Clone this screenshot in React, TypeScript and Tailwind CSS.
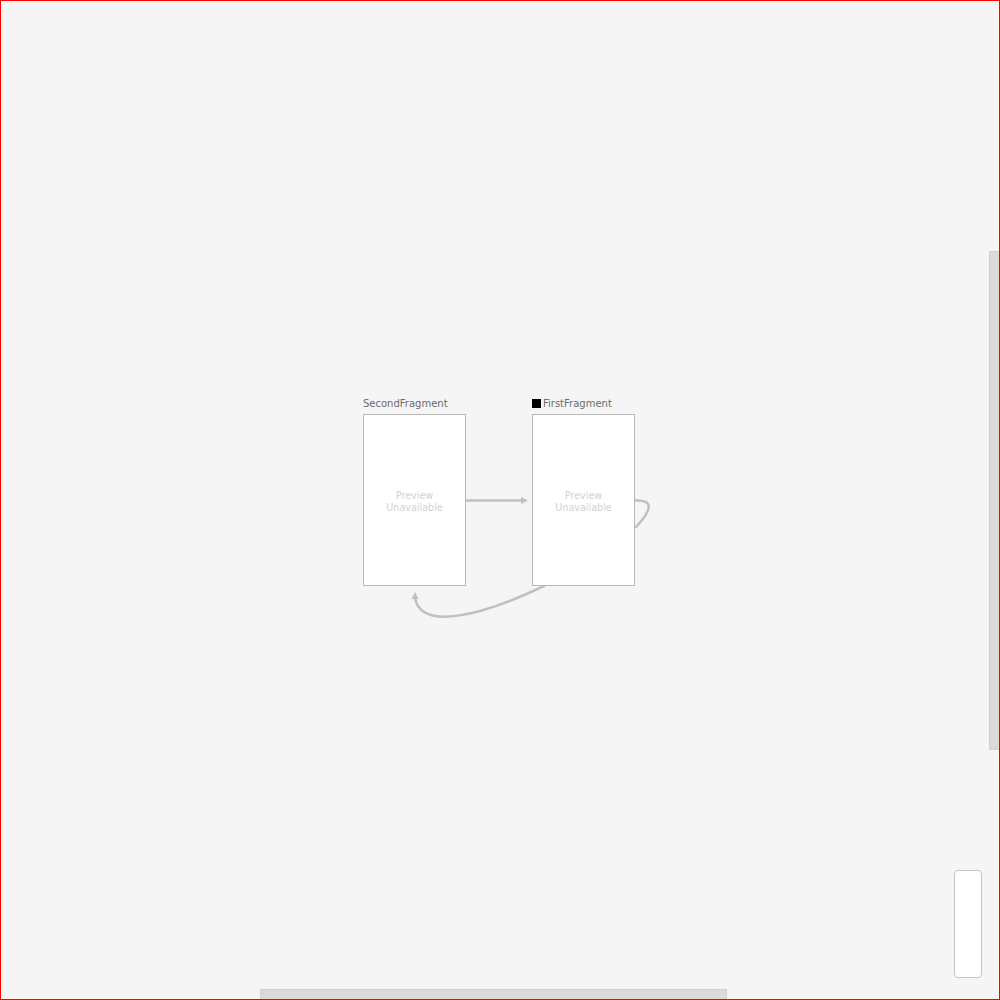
export default function App() {
  const font = { fontFamily: '"DejaVu Sans", sans-serif' };
  return (
    <div className="relative w-[1000px] h-[1000px] overflow-hidden bg-[#f5f5f5] border border-[#ff0000]" style={font}>
      <svg className="absolute left-0 top-0" width="1000" height="1000" viewBox="0 0 1000 1000">
        <g fill="none" stroke="#c0c0c0" strokeWidth="2.5" strokeLinecap="round">
          <path d="M466 499.5 L521 499.5" />
          <path d="M635 499.5 C652 499 652 508 635 526" />
          <path d="M543 585 C480 615 420 630 414 597" />
        </g>
        <polygon points="527,499.5 520,496 520,503" fill="#c0c0c0" />
        <polygon points="414,591 410.5,598 417.5,598" fill="#c0c0c0" />
      </svg>

      <div className="absolute left-[362px] top-[396px] flex flex-col gap-[4px]">
        <div className="h-[13px] text-[10px] leading-[13px] text-[#6b6b6b]">SecondFragment</div>
        <div className="w-[103px] h-[172px] bg-white border border-[#b8b8b8] flex items-center justify-center pt-[4px]">
          <div className="text-center text-[9.6px] leading-[12px] text-[#d2d2d2]">Preview<br />Unavailable</div>
        </div>
      </div>

      <div className="absolute left-[531px] top-[396px] flex flex-col gap-[4px]">
        <div className="h-[13px] flex items-center gap-[2px] text-[10px] leading-[13px] text-[#6b6b6b]">
          <span className="w-[9px] h-[9px] bg-black" />
          <span>FirstFragment</span>
        </div>
        <div className="w-[103px] h-[172px] bg-white border border-[#b8b8b8] flex items-center justify-center pt-[4px]">
          <div className="text-center text-[9.6px] leading-[12px] text-[#d2d2d2]">Preview<br />Unavailable</div>
        </div>
      </div>

      <div className="absolute left-[988px] top-[250px] w-[11px] h-[499px] bg-[#dadada] border border-[#d2d2d2]" />
      <div className="absolute left-[259px] top-[988px] w-[467px] h-[11px] bg-[#dadada] border border-[#d2d2d2]" />
      <div className="absolute left-[953px] top-[869px] w-[28px] h-[108px] bg-white border border-[#c4c4c4] rounded-[4px]" />
    </div>
  );
}
